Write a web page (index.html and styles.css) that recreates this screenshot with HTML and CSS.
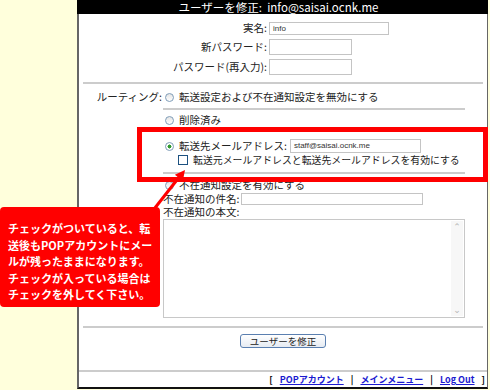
FILE: index.html
```html
<!DOCTYPE html>
<html lang="ja">
<head>
    <meta charset="UTF-8">
    <title>ユーザーを修正</title>
    <link rel="stylesheet" href="styles.css">
</head>
<body>
    <div class="page">
        <div class="side"></div>
        <div class="panel">
            <div class="title">ユーザーを修正:&nbsp; info@saisai.ocnk.me</div>
            <div class="inner">
                <div class="account">
                    <label>実名:</label><span class="field f-name">info</span>
                    <label>新パスワード:</label><span class="field f-pass"></span>
                    <label>パスワード(再入力):</label><span class="field f-pass"></span>
                </div>
                <div class="rule"></div>
                <div class="routing">
                    <div class="rt-label">ルーティング:</div>
                    <div class="rt-opts">
                        <div class="opt"><span class="radio"></span>転送設定および不在通知設定を無効にする</div>
                        <div class="sep"></div>
                        <div class="opt"><span class="radio"></span>削除済み</div>
                        <div class="opt fwd"><span class="radio on"></span>転送先メールアドレス: <span class="field f-fwd">staff@saisai.ocnk.me</span></div>
                        <div class="opt keep"><span class="check"></span>転送元メールアドレスと転送先メールアドレスを有効にする</div>
                        <div class="sep sep2"></div>
                        <div class="opt"><span class="radio"></span>不在通知設定を有効にする</div>
                        <div class="subj">不在通知の件名: <span class="field f-subj"></span></div>
                        <div class="msg">不在通知の本文:</div>
                        <div class="textarea">
                            <div class="scroll"><span>&#8963;</span><span>&#8964;</span></div>
                        </div>
                    </div>
                </div>
                <div class="rule rule2"></div>
                <div class="actions">
                    <button class="submit">ユーザーを修正</button>
                </div>
                <div class="foot">[ <a href="#">POPアカウント</a> | <a href="#">メインメニュー</a> | <a href="#">Log Out</a> ]</div>
            </div>
        </div>

        <!-- 注釈 -->
        <div class="highlight"></div>
        <svg class="arrow" width="490" height="390" viewBox="0 0 490 390">
            <line x1="151" y1="213" x2="180" y2="176" stroke="#f00" stroke-width="3"/>
            <polygon points="185,170 182.8,181 174.9,174.8" fill="#f00"/>
        </svg>
        <div class="note">
            チェックがついていると、転<br>
            送後もPOPアカウントにメー<br>
            ルが残ったままになります。<br>
            チェックが入っている場合は<br>
            チェックを外してく下さい。
        </div>
    </div>
</body>
</html>
```

FILE: styles.css
```css
body {
    margin: 0;
    padding: 0;
    background: #ffffdc;
    font-family: 'Noto Sans CJK JP', sans-serif;
    font-size: 10.5px;
    color: #222;
}
.page {
    position: relative;
    display: flex;
    width: 490px;
    height: 390px;
    overflow: hidden;
}
.side {
    width: 77px;
    flex-shrink: 0;
}
.panel {
    width: 411px;
    flex-shrink: 0;
}
.title {
    height: 14px;
    line-height: 14px;
    background: #000;
    color: #fff;
    font-size: 11.5px;
    text-align: center;
    padding-right: 8px;
    white-space: nowrap;
}
.inner {
    background: #fff;
    border-left: 2px solid #666;
    border-right: 1px solid #666;
    border-bottom: 2px solid #111;
    padding-top: 7px;
}
.account {
    display: grid;
    grid-template-columns: 188px auto;
    column-gap: 2px;
    row-gap: 4px;
    align-items: center;
    justify-items: start;
}
.account label {
    justify-self: end;
    line-height: 14px;
}
.field {
    display: inline-block;
    flex-shrink: 0;
    box-sizing: border-box;
    background: #fff;
    border: 1px solid #c4c4c4;
    font-family: 'Liberation Sans', sans-serif;
    font-size: 8px;
    color: #333;
    padding-left: 3px;
}
.f-name {
    width: 120px;
    height: 13px;
    line-height: 11px;
}
.f-pass {
    width: 83px;
    height: 16px;
}
.rule {
    height: 2px;
    background: #ccc;
    margin: 7px 4px 0 4px;
}
.rule2 {
    margin-top: 8px;
}
.routing {
    display: grid;
    grid-template-columns: 84px 302px;
    margin-top: 6px;
}
.rt-label {
    text-align: right;
    padding-right: 1px;
    line-height: 14px;
}
.opt {
    height: 14px;
    line-height: 14px;
    display: flex;
    align-items: center;
    white-space: nowrap;
}
.radio {
    display: inline-block;
    flex-shrink: 0;
    box-sizing: border-box;
    width: 9px;
    height: 9px;
    border: 1px solid #7f9db9;
    border-radius: 50%;
    background: linear-gradient(#e4e4e4, #fff);
    margin: 0 5px 0 2px;
}
.radio.on {
    background: radial-gradient(circle, #2f9a2f 0 1.8px, #fff 2.2px);
}
.check {
    display: inline-block;
    flex-shrink: 0;
    box-sizing: border-box;
    width: 10px;
    height: 10px;
    border: 1px solid #1c5180;
    background: #fff;
    margin: 0 5px 0 15px;
}
.keep {
    font-size: 9.9px;
}
.sep {
    height: 2px;
    background: #ccc;
    margin: 4px 0 3px 0;
}
.sep2 {
    margin: 5px 0 4px 0;
}
.fwd {
    margin-top: 12px;
}
.f-fwd {
    width: 131px;
    height: 14px;
    line-height: 12px;
    margin-left: 3px;
}
.subj {
    height: 13px;
    line-height: 13px;
    display: flex;
    align-items: center;
    white-space: nowrap;
}
.f-subj {
    width: 182px;
    height: 12px;
    margin-left: 2px;
}
.msg {
    height: 13px;
    line-height: 14px;
}
.textarea {
    margin-top: 1px;
    height: 99px;
    box-sizing: border-box;
    border: 1px solid #c8c8c8;
    display: flex;
    justify-content: flex-end;
}
.scroll {
    width: 12px;
    margin: 1px 1px 1px 0;
    background: #f7f7f7;
    display: flex;
    flex-direction: column;
    justify-content: space-between;
    align-items: center;
    color: #b5b5b5;
    font-family: 'DejaVu Sans', sans-serif;
    font-size: 9px;
    line-height: 12px;
}
.actions {
    height: 42px;
    display: flex;
    justify-content: center;
    align-items: flex-start;
}
.submit {
    margin-top: 6px;
    width: 86px;
    height: 14px;
    padding: 0;
    border: 1px solid #5a7fb0;
    border-radius: 3px;
    background: linear-gradient(#fff, #e6ebf2);
    font-family: 'Noto Sans CJK JP', sans-serif;
    font-size: 9.5px;
    line-height: 12px;
    color: #222;
}
.foot {
    border-top: 2px solid #ccc;
    height: 15px;
    line-height: 15px;
    text-align: right;
    padding-right: 2px;
    font-size: 9px;
    font-weight: bold;
    color: #000;
    white-space: nowrap;
}
.foot a {
    color: #1a1ad0;
    margin: 0 5px;
}
.highlight {
    position: absolute;
    left: 137px;
    top: 127px;
    width: 351px;
    height: 55px;
    box-sizing: border-box;
    border: 5px solid #f00;
}
.arrow {
    position: absolute;
    left: 0;
    top: 0;
    pointer-events: none;
}
.note {
    position: absolute;
    left: 0;
    top: 207px;
    width: 160px;
    height: 100px;
    box-sizing: border-box;
    padding: 13px 0 0 8px;
    background: #f00;
    border-radius: 4px;
    color: #fff;
    font-size: 11px;
    font-weight: bold;
    line-height: 16.6px;
    white-space: nowrap;
}
```
